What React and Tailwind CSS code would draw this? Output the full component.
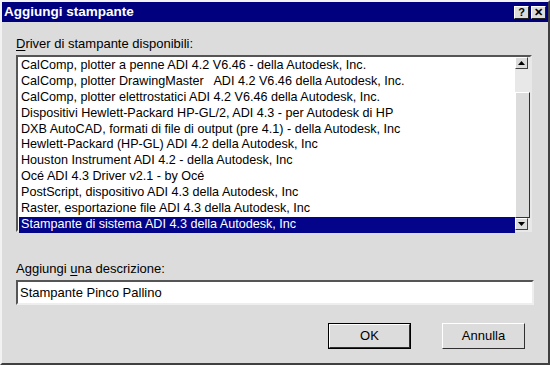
import React from 'react';

const drivers = [
  'CalComp, plotter a penne ADI 4.2 V6.46 - della Autodesk, Inc.',
  'CalComp, plotter DrawingMaster   ADI 4.2 V6.46 della Autodesk, Inc.',
  'CalComp, plotter elettrostatici ADI 4.2 V6.46 della Autodesk, Inc.',
  'Dispositivi Hewlett-Packard HP-GL/2, ADI 4.3 - per Autodesk di HP',
  'DXB AutoCAD, formati di file di output (pre 4.1) - della Autodesk, Inc',
  'Hewlett-Packard (HP-GL) ADI 4.2 della Autodesk, Inc',
  'Houston Instrument ADI 4.2 - della Autodesk, Inc',
  'Océ ADI 4.3 Driver v2.1 - by Océ',
  'PostScript, dispositivo ADI 4.3 della Autodesk, Inc',
  'Raster, esportazione file ADI 4.3 della Autodesk, Inc',
  'Stampante di sistema ADI 4.3 della Autodesk, Inc',
];

const TitleButton = ({ children }) => (
  <div className="w-[15px] h-[13px] bg-[#dcdcdc] border border-t-white border-l-white border-r-[#202020] border-b-[#202020] flex items-center justify-center text-[11px] font-bold leading-none text-black">
    {children}
  </div>
);

const ScrollArrow = ({ up }) => (
  <div className="w-[13px] h-[12px] bg-[#dcdcdc] border border-t-white border-l-white border-r-[#404040] border-b-[#404040] flex items-center justify-center">
    <svg width="7" height="4" viewBox="0 0 7 4">
      {up ? <path d="M3.5 0 L7 4 L0 4 Z" fill="#000" /> : <path d="M0 0 L7 0 L3.5 4 Z" fill="#000" />}
    </svg>
  </div>
);

const Button = ({ label, isDefault }) => (
  <div className={`w-[83px] h-[26px] flex items-center justify-center text-[13px] text-black bg-[#dcdcdc] ${isDefault ? 'border border-black' : ''}`}>
    <div className="w-full h-full flex items-center justify-center border border-t-white border-l-white border-r-[#303030] border-b-[#303030]">
      {label}
    </div>
  </div>
);

export default function App() {
  return (
    <div className="w-[550px] h-[365px] bg-[#dcdcdc] border-2 border-t-[#f2f2f2] border-l-[#f2f2f2] border-r-[#404040] border-b-[#404040] flex flex-col font-['Liberation_Sans',Arial,sans-serif] text-black overflow-hidden">
      {/* Title bar */}
      <div className="h-[20px] bg-[#00007e] flex items-center justify-between pl-[2px] pr-[2px] shrink-0">
        <span className="text-white font-bold text-[13.5px] leading-none">Aggiungi stampante</span>
        <div className="flex gap-[2px]">
          <TitleButton>?</TitleButton>
          <TitleButton>✕</TitleButton>
        </div>
      </div>

      <div className="flex flex-col px-[14px] pt-[14px]">
        <div className="text-[13px] leading-[15px] h-[19px]">
          <span className="underline underline-offset-2">D</span>river di stampante disponibili:
        </div>

        {/* List box */}
        <div className="w-[516px] h-[177px] bg-white border-2 border-t-[#555] border-l-[#555] border-r-[#e8e8e8] border-b-[#e8e8e8] flex">
          <div className="flex-1 flex flex-col pt-[1px] pl-[1px]">
            {drivers.map((d, i) => {
              const selected = i === drivers.length - 1;
              return (
                <div
                  key={d}
                  className={`h-[15.9px] leading-[15.9px] text-[12.6px] pl-[2px] whitespace-pre ${selected ? 'bg-[#04048a] text-white' : ''}`}
                >
                  {d}
                </div>
              );
            })}
          </div>
          <div className="w-[15px] flex flex-col bg-[#e8e8e8]">
            <ScrollArrow up />
            <div className="h-[23px]" />
            <div className="flex-1 bg-[#dcdcdc] border border-t-white border-l-white border-r-[#303030] border-b-[#303030]" />
            <ScrollArrow />
          </div>
        </div>

        <div className="text-[13px] leading-[15px] h-[15px] mt-[29px]">
          Aggiungi <span className="underline underline-offset-2">u</span>na descrizione:
        </div>
        <div className="mt-[4px] w-[518px] h-[25px] bg-white border-2 border-t-[#555] border-l-[#555] border-r-[#eeeeee] border-b-[#eeeeee] flex items-center pl-[2px] text-[13px]">
          Stampante Pinco Pallino
        </div>

        <div className="flex justify-end gap-[31px] mt-[18px] pr-[9px]">
          <Button label="OK" isDefault />
          <Button label="Annulla" />
        </div>
      </div>
    </div>
  );
}
